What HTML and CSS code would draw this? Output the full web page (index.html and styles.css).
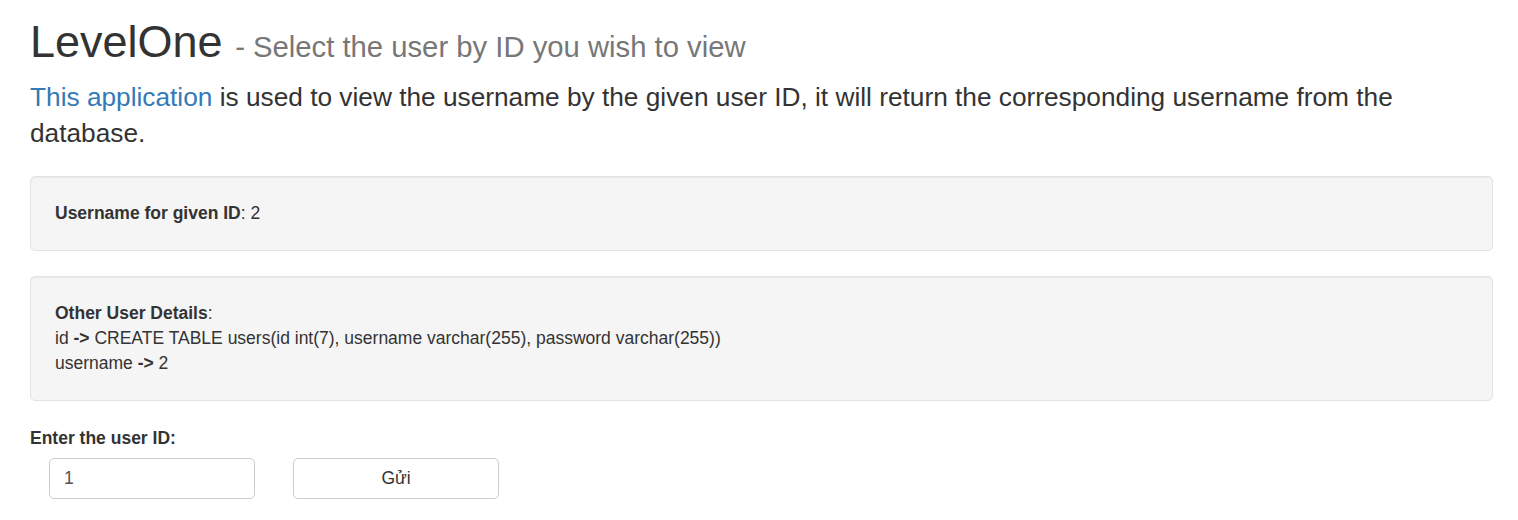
FILE: index.html
```html
<!DOCTYPE html>
<html lang="en">
<head>
<meta charset="utf-8">
<title>LevelOne</title>
<link rel="stylesheet" href="styles.css">
</head>
<body>
<div class="container">
  <h1 class="title">LevelOne <small>- Select the user by ID you wish to view</small></h1>
  <p class="lead"><a href="#">This application</a> is used to view the username by the given user ID, it will return the corresponding username from the database.</p>
  <div class="well"><b>Username for given ID</b>: 2</div>
  <div class="well"><b>Other User Details</b>:<br>id <b>-&gt;</b> CREATE TABLE users(id int(7), username varchar(255), password varchar(255))<br>username <b>-&gt;</b> 2</div>
  <form class="form">
    <label class="label" for="uid">Enter the user ID:</label>
    <div class="row">
      <input class="input" id="uid" type="text" value="1">
      <button class="btn" type="button">Gửi</button>
    </div>
  </form>
</div>
</body>
</html>
```
FILE: styles.css
```css
* { box-sizing: border-box; }
html, body { margin: 0; padding: 0; background: #fff; }
body {
  font-family: "Liberation Sans", Arial, Helvetica, sans-serif;
  font-size: 17.5px;
  line-height: 25px;
  color: #333;
}
.container { padding: 17px 25px 0 30px; }
.title {
  margin: 0 0 12px 0;
  font-size: 45px;
  font-weight: 500;
  line-height: 1.1;
  color: #333;
}
.title small {
  font-size: 65%;
  font-weight: 400;
  color: #777;
}
.lead {
  margin: 0 0 25px 0;
  font-size: 26.25px;
  line-height: 36px;
}
.lead a { color: #337ab7; text-decoration: none; }
.well {
  background: #f5f5f5;
  border: 1px solid #e3e3e3;
  border-radius: 5px;
  box-shadow: inset 0 1px 1px rgba(0,0,0,.05);
  padding: 24px;
  margin-bottom: 25px;
}
.well b { font-weight: 700; }
.form { margin: 0; }
.label {
  display: block;
  font-weight: 700;
  margin: 0 0 7px 0;
}
.row { display: flex; gap: 38px; padding-left: 19px; }
.input, .btn {
  width: 206px;
  height: 41px;
  border: 1px solid #ccc;
  border-radius: 5px;
  background: #fff;
  font-family: inherit;
  font-size: 17.5px;
}
.input { padding: 0 14px; color: #555; }
.btn { color: #333; text-align: center; }
```
